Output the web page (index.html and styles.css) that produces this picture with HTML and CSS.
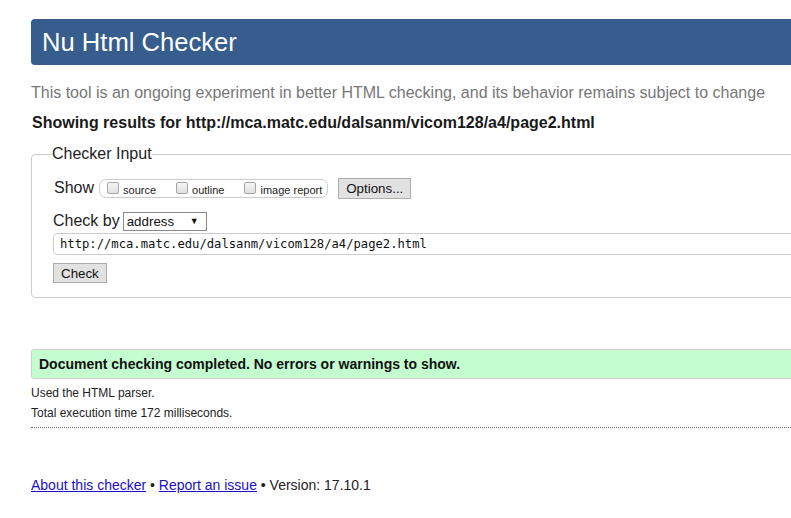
FILE: index.html
```html
<!DOCTYPE html>
<html lang="en">
<head>
<meta charset="utf-8">
<title>Nu Html Checker</title>
<link rel="stylesheet" href="styles.css">
</head>
<body>
<div class="page">
  <h1 class="title">Nu Html Checker</h1>
  <p class="intro">This tool is an ongoing experiment in better HTML checking, and its behavior remains subject to change</p>
  <p class="results-for">Showing results for http://mca.matc.edu/dalsanm/vicom128/a4/page2.html</p>
  <form class="checker-form">
    <fieldset class="input-box">
      <legend class="legend">Checker Input</legend>
      <div class="row show-row">
        <span class="row-label show-label">Show</span>
        <span class="options-group">
          <span class="opt"><span class="cb"></span><span class="opt-text">source</span></span>
          <span class="opt"><span class="cb"></span><span class="opt-text">outline</span></span>
          <span class="opt"><span class="cb"></span><span class="opt-text">image report</span></span>
        </span>
        <span class="btn options-btn">Options...</span>
      </div>
      <div class="row checkby-row">
        <span class="row-label">Check by</span>
        <span class="select"><span class="select-text">address</span><span class="select-arrow">&#9660;</span></span>
      </div>
      <div class="url-input">http://mca.matc.edu/dalsanm/vicom128/a4/page2.html</div>
      <span class="btn check-btn">Check</span>
    </fieldset>
  </form>
  <div class="success">Document checking completed. No errors or warnings to show.</div>
  <p class="meta">Used the HTML parser.</p>
  <p class="meta">Total execution time 172 milliseconds.</p>
  <div class="dotted"></div>
  <p class="footer"><a href="#" class="link">About this checker</a> &bull; <a href="#" class="link">Report an issue</a> &bull; Version: 17.10.1</p>
</div>
</body>
</html>
```

FILE: styles.css
```css
html, body {
  margin: 0;
  padding: 0;
  overflow: hidden;
  background: #ffffff;
}

body {
  font-family: "Liberation Sans", Arial, sans-serif;
  color: #222222;
}

.page {
  margin-left: 31px;
  padding-top: 19px;
  width: 1100px;
}

.title {
  margin: 0;
  height: 46px;
  line-height: 46px;
  padding-left: 11px;
  background: #365d8d;
  color: #ffffff;
  font-size: 25.6px;
  font-weight: normal;
  border-radius: 4px 0 0 4px;
}

.intro {
  margin: 18px 0 0 0;
  font-size: 16px;
  line-height: 20px;
  color: #777777;
}

.results-for {
  margin: 10px 0 0 1px;
  font-size: 16px;
  line-height: 20px;
  font-weight: bold;
  color: #1a1a1a;
}

.checker-form {
  margin: 11px 0 0 0;
}

.input-box {
  margin: 0;
  border: 1px solid #cccccc;
  border-radius: 4px 0 0 4px;
  padding: 0 0 14px 21px;
}

.legend {
  margin-left: -1px;
  padding: 0;
  font-size: 16px;
  line-height: 20px;
  color: #222222;
}

.row {
  display: flex;
  align-items: center;
}

.show-row {
  margin-top: 14px;
  height: 21px;
}

.row-label {
  font-size: 16px;
  line-height: 20px;
}

.show-label {
  padding-bottom: 2px;
  margin-right: 5px;
  margin-left: 1px;
}

.options-group {
  display: flex;
  align-items: center;
  height: 17px;
  border: 1px solid #cccccc;
  border-radius: 7px;
  padding: 0 5px 0 7px;
  gap: 20px;
}

.opt {
  display: flex;
  align-items: center;
  gap: 4px;
}

.cb {
  display: block;
  width: 10px;
  height: 10px;
  border: 1px solid #a6a6a6;
  border-radius: 2px;
  background: linear-gradient(#f4f4f4, #e2e2e2);
  margin-top: -2px;
}

.opt-text {
  font-size: 11px;
  line-height: 13px;
  padding-top: 3px;
  color: #222222;
}

.btn {
  display: inline-flex;
  align-items: center;
  box-sizing: border-box;
  border: 1px solid #adadad;
  background: #e1e1e1;
  font-size: 13.33px;
  color: #111111;
  padding: 0 7px;
}

.options-btn {
  height: 21px;
  margin-left: 10px;
}

.checkby-row {
  margin-top: 12px;
  height: 20px;
}

.select {
  display: flex;
  align-items: center;
  justify-content: space-between;
  box-sizing: border-box;
  width: 84px;
  height: 19px;
  margin-left: 3px;
  border: 1px solid #8a8a8a;
  padding: 0 7px 0 3px;
  background: #ffffff;
  font-size: 13.33px;
  color: #111111;
}

.select-arrow {
  font-size: 9px;
  line-height: 9px;
}

.url-input {
  box-sizing: border-box;
  margin-top: 2px;
  height: 22px;
  line-height: 20px;
  border: 1px solid #cccccc;
  border-right: none;
  border-radius: 5px 0 0 5px;
  padding-left: 6px;
  font-family: "DejaVu Sans Mono", "Liberation Mono", monospace;
  font-size: 12.2px;
  color: #111111;
}

.check-btn {
  height: 20px;
  margin-top: 8px;
}

.success {
  margin-top: 51px;
  box-sizing: border-box;
  height: 30px;
  line-height: 28px;
  border: 1px solid #cccccc;
  border-radius: 3px 0 0 3px;
  background: #c4fdcf;
  padding-left: 7px;
  font-size: 14px;
  font-weight: bold;
  color: #111111;
}

.meta {
  margin: 0;
  font-size: 12px;
  line-height: 19.5px;
  color: #222222;
}

.success + .meta {
  margin-top: 5px;
}

.dotted {
  margin-top: 4px;
  border-top: 1px dotted #666666;
}

.footer {
  margin: 47px 0 0 0;
  font-size: 14px;
  line-height: 20px;
  color: #222222;
}

.link {
  color: #1a0dcc;
  text-decoration: underline;
}
```
